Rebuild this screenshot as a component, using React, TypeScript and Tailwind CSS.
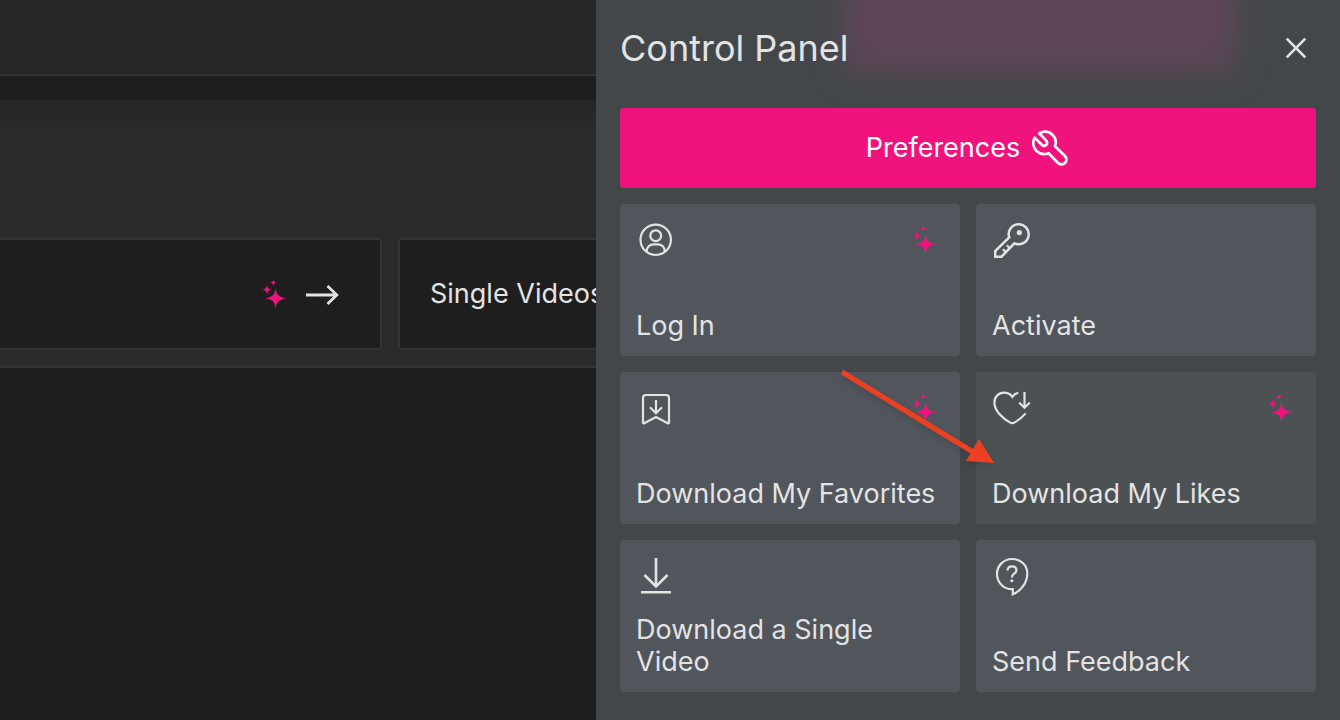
import type { ReactNode } from 'react'

interface IconProps {
  className?: string
  children: ReactNode
}

function Icon({ className = '', children }: IconProps) {
  return (
    <svg
      viewBox="0 0 40 40"
      fill="none"
      stroke="currentColor"
      strokeWidth="2.2"
      aria-hidden="true"
      className={`size-10 shrink-0 ${className}`}
    >
      {children}
    </svg>
  )
}

function SparkleIcon() {
  return (
    <Icon className="text-[#f1137d]">
      <g fill="currentColor" stroke="none">
        <path d="M21.700 14c.7 6.800 3.300 9.200 10.600 10.200-7.300 1.100-9.900 3.600-10.600 10.300-.8-6.700-3.300-9.200-10.400-10.300 7.100-1 9.600-3.400 10.400-10.200Z" />
        <path d="M13 10.400c.5 3.500 1.700 4.600 5.400 5.200-3.700.6-4.900 1.800-5.400 5.200-.5-3.400-1.700-4.600-5.400-5.200 3.700-.6 4.900-1.700 5.400-5.200Z" />
        <path d="M19.300 5.500c.3 2.100 1 2.900 3.300 3.200-2.300.3-3 1.100-3.300 3.200-.3-2.100-1-2.900-3.300-3.200 2.300-.3 3-1.100 3.300-3.200Z" />
      </g>
    </Icon>
  )
}

function ArrowIcon() {
  return (
    <Icon>
      <path d="M4 21h31M25.500 12l9.300 9-9.300 9" strokeWidth="2.800" />
    </Icon>
  )
}

function CloseIcon() {
  return (
    <Icon>
      <path d="M10.700 10.700l18.600 18.600M29.300 10.700l-18.600 18.600" strokeWidth="2.600" />
    </Icon>
  )
}

function WrenchIcon() {
  return (
    <Icon>
      <path
        d="M9.200 5.300C13.500 2.500 19 3.200 22.500 6.700c3.200 3.200 4 7.600 2.500 11.600l9.600 9.200c2.400 2.300 2.400 5.600.4 7.500-2 2-5.200 1.900-7.400-.5l-9-9.300c-4.300 1.700-8.900.9-12.100-2.300C3 19.400 2.300 14 4.600 9.600l7.200 7.100c1.500 1.400 3.300 1.300 4.500.1 1.200-1.200 1.200-3-.2-4.400Z"
        strokeWidth="2.700"
        strokeLinejoin="round"
      />
    </Icon>
  )
}

function UserIcon() {
  return (
    <Icon>
      <circle cx="19.700" cy="19.800" r="15.200" />
      <circle cx="19.700" cy="15.700" r="5.400" />
      <path d="M10.800 32v-1.200a6.500 6.500 0 0 1 6.500-6.500h4.900a6.500 6.500 0 0 1 6.500 6.500V32" />
    </Icon>
  )
}

function KeyIcon() {
  return (
    <Icon>
      <path d="M17.200 17.400 3.200 31v5.700h6.300L22.400 23.300A10 10 0 1 0 17.200 17.400Z" strokeWidth="2.500" />
      <path d="M10.800 29.300l3.200 3M14.800 25.300l3.200 3" />
      <circle cx="27.300" cy="12.600" r="2.600" fill="currentColor" stroke="none" />
    </Icon>
  )
}

function BookmarkIcon() {
  return (
    <Icon>
      <path d="M7 34.500V10a3 3 0 0 1 3-3h20a3 3 0 0 1 3 3v24.500a.8.8 0 0 1-1.200.7L20 29 8.200 35.200a.8.8 0 0 1-1.200-.7Z" />
      <path d="M20 12v13M14 19.300l6 6 6-6" />
    </Icon>
  )
}

function HeartIcon() {
  return (
    <Icon>
      <path d="M26.300 4.800c-2.600.5-4.500 1.800-6 4C18.400 6 15.500 4.700 12 4.700c-5.500 0-9.600 4.300-9.600 10 0 7.800 8 15.500 15.900 19.900 1.400.8 2.600.8 4 0 4.300-2.500 8.200-5.600 11.300-9.200" />
      <path d="M32.500 4v15.500M27.100 14.500l5.400 5.300 5.400-5.300" />
    </Icon>
  )
}

function DownloadIcon() {
  return (
    <Icon>
      <path d="M20 2v29M8.500 19 20 30.500 31.500 19M5 36.300h30" strokeWidth="2.600" />
    </Icon>
  )
}

function FeedbackIcon() {
  return (
    <Icon>
      <path d="M20.800 38.300v-5.200C11.800 33.400 5 26.700 5 18A15 15 0 0 1 20 3c8.500 0 15.300 6 15.300 14.500 0 9.300-6.300 17.500-14.500 20.800Z" />
      <path d="M15.500 14.500c.2-2.600 1.900-4.100 4.400-4.100 2.600 0 4.500 1.500 4.500 3.800 0 3.700-4.600 3.300-4.600 7.300" />
      <circle cx="19.800" cy="24.700" r="1.500" fill="currentColor" stroke="none" />
    </Icon>
  )
}

interface Tile {
  label: string
  icon: ReactNode
  sparkle?: boolean
  hovered?: boolean
}

const tiles: Tile[] = [
  { label: 'Log In', icon: <UserIcon />, sparkle: true },
  { label: 'Activate', icon: <KeyIcon /> },
  { label: 'Download My Favorites', icon: <BookmarkIcon />, sparkle: true },
  { label: 'Download My Likes', icon: <HeartIcon />, sparkle: true, hovered: true },
  { label: 'Download a Single Video', icon: <DownloadIcon /> },
  { label: 'Send Feedback', icon: <FeedbackIcon /> },
]

function PanelTile({ label, icon, sparkle, hovered }: Tile) {
  return (
    <button
      type="button"
      className={`flex min-h-38 flex-col justify-between rounded-sm px-4 pt-4 pb-3.5 text-left ${
        hovered ? 'bg-[#4c5154]' : 'bg-[#51555c]'
      }`}
    >
      <span className="flex w-full justify-between">
        {icon}
        {sparkle && <SparkleIcon />}
      </span>
      <span>{label}</span>
    </button>
  )
}

function ControlPanel() {
  return (
    <aside className="absolute inset-y-0 right-0 w-[744px] max-w-full overflow-hidden bg-[#43474a] px-6">
      {/* Glow of the header button through the panel */}
      <div className="absolute -top-8 right-26 h-26 w-98 rounded-2xl bg-[#5f4658] blur-lg" />

      <header className="relative flex h-27 items-center justify-between pb-3">
        <h2 className="text-4xl">Control Panel</h2>
        <button type="button" aria-label="Close">
          <CloseIcon />
        </button>
      </header>

      <div className="relative grid grid-cols-2 gap-4">
        <button
          type="button"
          className="col-span-2 flex h-20 items-center justify-center gap-2.5 rounded-sm bg-[#f1137d] text-white"
        >
          Preferences
          <WrenchIcon />
        </button>
        {tiles.map((tile) => (
          <PanelTile key={tile.label} {...tile} />
        ))}
      </div>
    </aside>
  )
}

function Pointer() {
  return (
    <svg
      viewBox="0 0 170 110"
      aria-hidden="true"
      className="pointer-events-none absolute top-[362px] right-[334px] h-[110px] w-[170px] drop-shadow-md"
    >
      <path d="M6 10 142 93" stroke="#ed4023" strokeWidth="5" />
      <path d="M143 77 158 101 130 99Z" fill="#ed4023" />
    </svg>
  )
}

export default function App() {
  return (
    <div className="relative min-h-screen overflow-hidden bg-[#1e1e1e] font-['Inter','Liberation_Sans',sans-serif] text-[27px] leading-8 text-[#e3e3e3]">
      <div className="h-19 border-b-2 border-[#333333] bg-[#272727]" />

      <main className="mt-6 border-b-2 border-[#333333] bg-linear-to-b from-[#252525] to-[#2a2a2a] to-10% pt-[138px] pb-4">
        <div className="flex gap-4">
          <a
            href="#all"
            aria-label="All videos"
            className="flex h-28 w-[382px] items-center justify-end gap-2 rounded-r-sm border-2 border-l-0 border-[#333333] bg-[#1e1e1e] pr-[38px]"
          >
            <SparkleIcon />
            <ArrowIcon />
          </a>
          <a
            href="#single"
            className="flex h-28 flex-1 items-center rounded-sm border-2 border-[#333333] bg-[#1e1e1e] px-[30px]"
          >
            Single Videos
          </a>
        </div>
      </main>

      <ControlPanel />
      <Pointer />
    </div>
  )
}
